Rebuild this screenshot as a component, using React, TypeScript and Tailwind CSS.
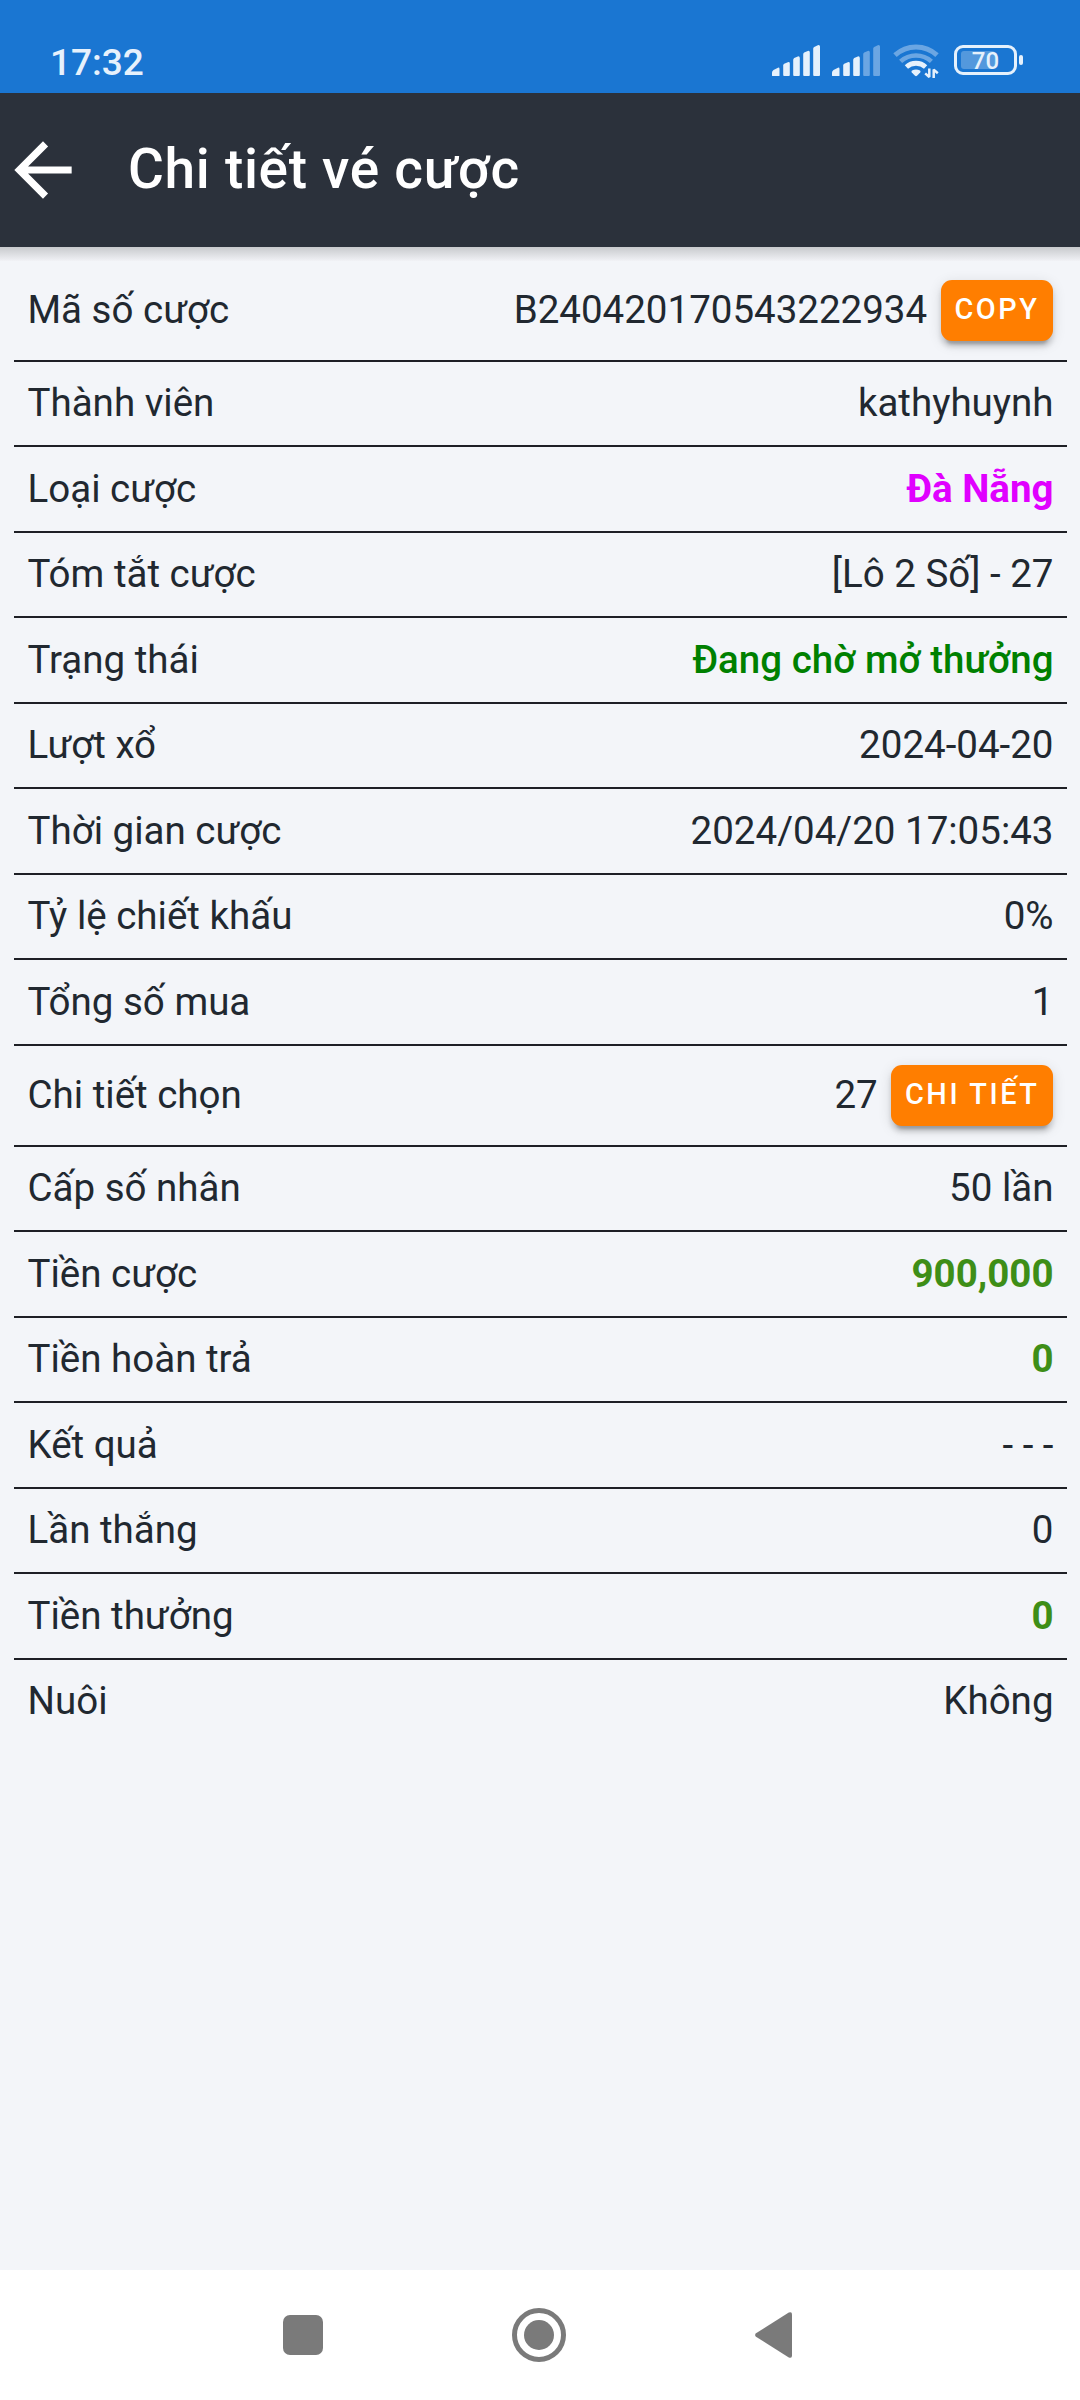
import React from "react";
import { MdArrowBack } from "react-icons/md";

interface DetailRow {
  label: string;
  value: string;
  valueClass?: string;
  action?: string;
}

const rows: DetailRow[] = [
  { label: "Mã số cược", value: "B240420170543222934", action: "Copy" },
  { label: "Thành viên", value: "kathyhuynh" },
  { label: "Loại cược", value: "Đà Nẵng", valueClass: "font-bold text-[#e000ff]" },
  { label: "Tóm tắt cược", value: "[Lô 2 Số] - 27" },
  {
    label: "Trạng thái",
    value: "Đang chờ mở thưởng",
    valueClass: "font-medium text-[#008000]",
  },
  { label: "Lượt xổ", value: "2024-04-20" },
  { label: "Thời gian cược", value: "2024/04/20 17:05:43" },
  { label: "Tỷ lệ chiết khấu", value: "0%" },
  { label: "Tổng số mua", value: "1" },
  { label: "Chi tiết chọn", value: "27", action: "Chi tiết" },
  { label: "Cấp số nhân", value: "50 lần" },
  { label: "Tiền cược", value: "900,000", valueClass: "font-bold text-[#3e8e17]" },
  { label: "Tiền hoàn trả", value: "0", valueClass: "font-bold text-[#3e8e17]" },
  { label: "Kết quả", value: "- - -" },
  { label: "Lần thắng", value: "0" },
  { label: "Tiền thưởng", value: "0", valueClass: "font-bold text-[#3e8e17]" },
  { label: "Nuôi", value: "Không" },
];

const SignalBars: React.FC<{ level: number }> = ({ level }) => {
  const bars = [
    "M0 30.5V27.5Q0 26 1.5 25L5.5 22.9Q7.5 22 7.5 24V30.5Q7.5 31 7 31H1Q0 31 0 30.5Z",
    "M11.2 30V20.5Q11.2 19.3 12.2 18.7L15.8 17.2Q17.8 16.5 17.8 18.5V30Q17.8 31 16.8 31H12.2Q11.2 31 11.2 30Z",
    "M21.2 30V15Q21.2 13.8 22.2 13L25.8 11.4Q27.8 11 27.8 13V30Q27.8 31 26.8 31H22.2Q21.2 31 21.2 30Z",
    "M31.2 30V9.4Q31.2 8.2 32.2 7.5L35.8 5.9Q37.8 5.4 37.8 7.4V30Q37.8 31 36.8 31H32.2Q31.2 31 31.2 30Z",
    "M41.2 30V3.8Q41.2 2.6 42.2 1.9L45.8 .2Q48 -.4 48 1.6V30Q48 31 47 31H42.2Q41.2 31 41.2 30Z",
  ];
  return (
    <svg width="48" height="31" viewBox="0 0 48 31" fill="#e6f1fc">
      {bars.map((d, i) => (
        <path key={i} d={d} opacity={i < level ? 1 : 0.4} />
      ))}
    </svg>
  );
};

const WifiIcon = () => (
  <svg width="47" height="36" viewBox="0 0 47 36" fill="none" stroke="#e6f1fc">
    <path d="M2 12.2A31 31 0 0 1 44 12.2" strokeWidth="5" opacity="0.4" />
    <path d="M7.6 18.4A23 23 0 0 1 38.4 18.4" strokeWidth="4.6" opacity="0.4" />
    <path d="M13.4 24A14.2 14.2 0 0 1 32.6 24" strokeWidth="4.8" />
    <path
      d="M19 27.6Q23 25.2 27 27.6Q28 28.4 27.2 29.4L24 32.7Q23 33.6 22 32.7L18.8 29.4Q18 28.4 19 27.6Z"
      fill="#e6f1fc"
      stroke="none"
    />
    <path
      d="M36.3 25.6V34L32.2 30.4M40.7 35V26.6L44.8 30.2"
      strokeWidth="2.5"
      strokeLinejoin="bevel"
    />
  </svg>
);

const StatusBar = () => (
  <div className="flex h-[93px] items-start justify-between bg-[#1a76d2] pl-[50px] pr-[57px] pt-[43px] text-[#e6f1fc]">
    <span className="pt-px text-[37px] font-medium leading-[38px]">17:32</span>
    <div className="flex items-start gap-3 pt-[2px]">
      <SignalBars level={5} />
      <SignalBars level={3} />
      <div className="-mt-[2px] ml-px">
        <WifiIcon />
      </div>
      <div className="ml-[2px] flex items-center gap-[2px]">
        <div className="relative flex h-[30px] w-[63px] items-center justify-center rounded-[9px] border-[3px] border-[#e6f1fc]">
          <div className="absolute left-1 top-[3px] h-[18px] w-[34px] rounded-[3px] bg-white/25" />
          <span className="relative pt-[2px] text-[24px] font-medium leading-6">70</span>
        </div>
        <div className="h-[10px] w-1 rounded-[2px] bg-[#e6f1fc]" />
      </div>
    </div>
  </div>
);

const Header = () => (
  <header className="flex h-[154px] items-center bg-[#2b313b] text-white">
    <MdArrowBack size={86} />
    <h1 className="ml-[42px] pb-[2px] text-[55px] font-medium leading-none tracking-[0.0125em]">
      Chi tiết vé cược
    </h1>
  </header>
);

const Row: React.FC<DetailRow> = ({ label, value, valueClass = "", action }) => (
  <div
    className={`flex items-start justify-between border-b-2 border-[#1e1f26] pl-[13.5px] last:border-b-0 ${
      action
        ? "h-[101px] pr-[14px] pt-[19px] first:h-[100.75px]"
        : "h-[85.5px] pr-[13.5px] pt-[12.5px]"
    }`}
  >
    <span className={`leading-[58px] ${action ? "pt-px" : ""}`}>{label}</span>
    <div className="flex items-start gap-[13.75px]">
      <span className={`leading-[58px] ${action ? "pt-px" : ""} ${valueClass}`}>
        {value}
      </span>
      {action && (
        <button className="h-[61px] rounded-[11px] bg-[#ff7e00] px-[13.5px] pb-[2px] text-[28.875px] font-medium uppercase tracking-[0.0893em] text-white shadow-[0_8px_3px_-5px_rgba(0,0,0,0.2),0_5.5px_5.5px_rgba(0,0,0,0.14),0_3px_14px_rgba(0,0,0,0.12)]">
          {action}
        </button>
      )}
    </div>
  </div>
);

const NavBar = () => (
  <nav className="flex h-[130px] items-center bg-white pl-[283px] text-[#7a7a7a]">
    <div className="h-10 w-10 rounded-[7px] bg-[#7a7a7a]" />
    <svg className="ml-[189px]" width="54" height="54" viewBox="0 0 54 54">
      <circle cx="27" cy="27" r="24.5" fill="none" stroke="currentColor" strokeWidth="5" />
      <circle cx="27" cy="27" r="15" fill="currentColor" />
    </svg>
    <svg className="ml-[189px]" width="37" height="46" viewBox="0 0 37 46">
      <path
        d="M1 21.2L33.8.6Q37 -.8 37 2.4V43.6Q37 46.8 33.8 45.4L1 24.8Q-.8 23 1 21.2Z"
        fill="currentColor"
      />
    </svg>
  </nav>
);

export default function App() {
  return (
    <div className="flex h-[2400px] w-[1080px] flex-col bg-[#f3f5f9] font-['Roboto',sans-serif] text-[#212830]">
      <StatusBar />
      <Header />
      <div className="h-[14px] bg-linear-to-b from-[#c8cacd] to-[#f1f2f6]" />
      <main className="flex-1 pl-[14px] pr-[13px] text-[38.5px]">
        {rows.map((row) => (
          <Row key={row.label} {...row} />
        ))}
      </main>
      <NavBar />
    </div>
  );
}
